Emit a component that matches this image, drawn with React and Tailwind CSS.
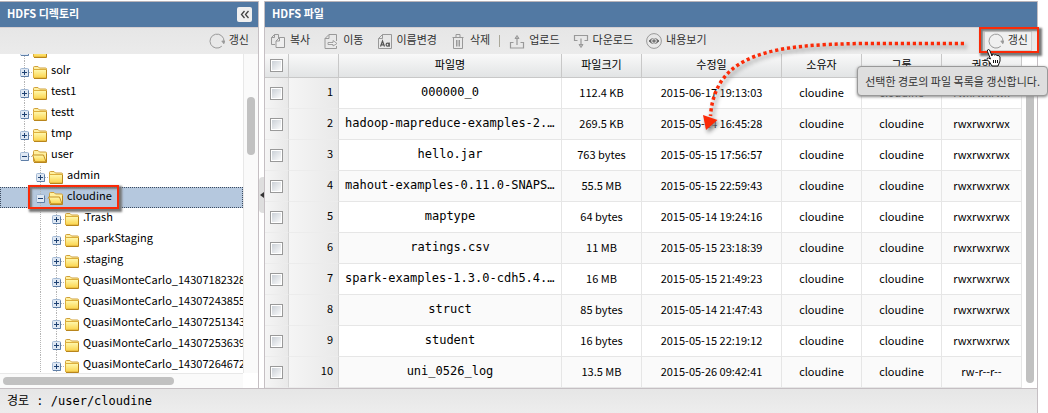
import React from "react";

const files = [
  ["000000_0", "112.4 KB", "2015-06-17 19:13:03", "rwxrwxrwx"],
  ["hadoop-mapreduce-examples-2.2.0.jar", "269.5 KB", "2015-05-14 16:45:28", "rwxrwxrwx"],
  ["hello.jar", "763 bytes", "2015-05-15 17:56:57", "rwxrwxrwx"],
  ["mahout-examples-0.11.0-SNAPSHOT.jar", "55.5 MB", "2015-05-15 22:59:43", "rwxrwxrwx"],
  ["maptype", "64 bytes", "2015-05-14 19:24:16", "rwxrwxrwx"],
  ["ratings.csv", "11 MB", "2015-05-15 23:18:39", "rwxrwxrwx"],
  ["spark-examples-1.3.0-cdh5.4.0.jar", "16 MB", "2015-05-15 21:49:23", "rwxrwxrwx"],
  ["struct", "85 bytes", "2015-05-14 21:47:43", "rwxrwxrwx"],
  ["student", "16 bytes", "2015-05-15 22:19:12", "rwxrwxrwx"],
  ["uni_0526_log", "13.5 MB", "2015-05-26 09:42:41", "rw-r--r--"],
];

const tree = [
  { name: "", level: 0 },
  { name: "solr", level: 0 },
  { name: "test1", level: 0 },
  { name: "testt", level: 0 },
  { name: "tmp", level: 0 },
  { name: "user", level: 0, open: true, last: true },
  { name: "admin", level: 1 },
  { name: "cloudine", level: 1, open: true, selected: true },
  { name: ".Trash", level: 2 },
  { name: ".sparkStaging", level: 2 },
  { name: ".staging", level: 2 },
  { name: "QuasiMonteCarlo_143071823280", level: 2 },
  { name: "QuasiMonteCarlo_14307243855", level: 2 },
  { name: "QuasiMonteCarlo_143072513433", level: 2 },
  { name: "QuasiMonteCarlo_14307253639", level: 2 },
  { name: "QuasiMonteCarlo_14307264672", level: 2 },
];

function Guide({ end = 21 }) {
  return <path d={`M8.5 0V${end}`} stroke="#b5b5b5" strokeDasharray="1 1" />;
}

function Cell({ children }) {
  return (
    <svg width="16" height="21" viewBox="0 0 16 21" fill="none" className="shrink-0">
      {children}
    </svg>
  );
}

function Expander({ open, last }) {
  return (
    <Cell>
      <Guide end={last ? 8 : 21} />
      <path d="M13 11.5H16" stroke="#b5b5b5" strokeDasharray="1 1" />
      <rect x="4.5" y="7.5" width="8" height="8" rx="1" fill="#dfe8f3" stroke="#a3b9d4" />
      <path d="M5 15.5H12.5V8.5" stroke="#5f7fa8" />
      <path d={open ? "M6 11.5H11" : "M6 11.5H11M8.5 9V14"} stroke="#1f4273" />
    </Cell>
  );
}

function Folder({ open }) {
  return (
    <svg width="16" height="21" viewBox="0 0 16 21" className="shrink-0">
      <defs>
        <linearGradient id="folder" x1="0" y1="0" x2="0" y2="1">
          <stop offset="0" stopColor="#fff9b0" />
          <stop offset="1" stopColor="#fbd34a" />
        </linearGradient>
      </defs>
      <path
        d="M1.5 16V6.500Q1.500 5.500 2.500 5.500H6L7.500 7H13.500Q14.500 7 14.500 8V16Q14.500 17 13.500 17H2.500Q1.500 17 1.500 16Z"
        fill="#fff0a0"
        stroke="#d0a03a"
      />
      {open ? (
        <path d="M0.6 10H11.5L14 16.8H3Z" fill="url(#folder)" stroke="#c48f22" />
      ) : (
        <path d="M1.5 8.500H14.500V16Q14.500 17 13.500 17H2.500Q1.500 17 1.500 16Z" fill="url(#folder)" stroke="#dcae3c" />
      )}
      <path d="M2 17.500H14.500V9" fill="none" stroke="#b8851c" />
    </svg>
  );
}

function TreeRow({ name, level, open, last, selected }) {
  return (
    <li
      className={
        "flex h-[21px] items-start pl-4 whitespace-nowrap " +
        (selected ? "bg-[#b5c8de] outline-1 -outline-offset-1 outline-dotted outline-[#3c4b60]" : "")
      }
    >
      {level > 0 && <Cell />}
      {level > 1 && (
        <Cell>
          <Guide />
        </Cell>
      )}
      <Expander open={open} last={last} />
      <Folder open={open} />
      <span className="pl-[3px] leading-4">{name}</span>
    </li>
  );
}

function Icon({ children }) {
  return (
    <svg width="16" height="18" viewBox="0 0 16 18" fill="none" stroke="#999" className="shrink-0">
      {children}
    </svg>
  );
}

const icons = {
  copy: (
    <Icon>
      <path d="M8.500 6V2.500H4.500L1.500 5.500V12.500H5M4.500 2.500V5.500H1.500" />
      <path d="M9.500 5.500H14.500V15.500H6V9ZM9.500 5.500V9H6" fill="#efefef" />
    </Icon>
  ),
  move: (
    <Icon>
      <path d="M13.500 9V2.500H6L2 6.500V16.500H13.500V14M6 2.500V6.500H2" />
      <path d="M5 10.500H10V8.500L14 11.500L10 14V12.500H5Z" fill="#efefef" strokeWidth="0.9" />
    </Icon>
  ),
  rename: (
    <Icon>
      <path d="M14.500 16.500H1.500V6.500L5.500 2.500H14.500ZM5.500 2.500V6.500H1.500" />
      <path d="M3.500 14.500L5.500 9L7.500 14.500M4.200 12.800H7" stroke="#555" strokeWidth="1.2" />
      <path d="M12.200 10.500V14.700" stroke="#555" strokeWidth="1.2" />
      <circle cx="10.600" cy="12.700" r="1.500" stroke="#555" strokeWidth="1.2" />
    </Icon>
  ),
  remove: (
    <Icon>
      <path d="M2.500 5.500H13.500M6 5V2.500H10V5M3.500 6V16.500H12.500V6M6.500 8V14.500M8 8V14.500M9.500 8V14.500" />
    </Icon>
  ),
  upload: (
    <Icon>
      <path d="M4.500 10.500H1.500V16H14.500V10.500H11.500M8 13V6.500" strokeWidth="1.200" />
      <path d="M8 3.500L10 6.500H6Z" fill="#bbb" />
    </Icon>
  ),
  download: (
    <Icon>
      <path d="M4.500 8.500H1.500V3.500H14.500V8.500H11.500M8 6.500V13" strokeWidth="1.200" />
      <path d="M8 15.500L10 12.500H6Z" fill="#bbb" />
    </Icon>
  ),
  view: (
    <Icon>
      <circle cx="8" cy="9" r="7.400" />
      <path d="M3 9Q8 3.800 13 9Q8 14.200 3 9Z" fill="#666" stroke="#666" />
      <circle cx="8" cy="9" r="2.300" fill="#777" stroke="#fff" strokeWidth="0.9" />
    </Icon>
  ),
  refresh: (
    <Icon>
      <path d="M12.800 14.200A7 7 0 1 1 15 9.500" />
      <path d="M12.800 9L14.800 11.800L16 9Z" fill="#999" strokeWidth="0.8" />
    </Icon>
  ),
};

function Tool({ icon, label, className = "" }) {
  return (
    <button type="button" className={"flex items-center gap-1 whitespace-nowrap text-[#333] " + className}>
      {icons[icon]}
      <span className="pb-1">{label}</span>
    </button>
  );
}

function Title({ children }) {
  return (
    <header className="flex h-[26px] items-center justify-between border-t border-[#b9b4b9] bg-[#5279a3] pr-[6px] pl-[7px] text-white">
      {children}
    </header>
  );
}

function Check({ label }) {
  return (
    <input
      type="checkbox"
      aria-label={label}
      className="mx-auto block size-[13px] appearance-none border border-[#999] bg-linear-to-br from-[#c6ccd3] to-white shadow-[inset_0_0_0_1px_#fff]"
    />
  );
}

const headBase =
  "h-6 border-r border-b border-[#c8c8c8] bg-linear-to-b from-[#f9f9f9] to-[#e2e4e5] p-0 font-normal";
const headCell = headBase + " pb-1";
const bodyCell = "h-[31px] border-r border-b border-[#e6e6e6] p-0 pb-[2px]";
const grayCell =
  "h-[31px] border-r border-b border-r-[#d6d6d6] border-b-[#ececec] bg-linear-to-r from-[#f5f5f5] to-[#e9e9e9] p-0";

export default function App() {
  return (
    <div className="relative overflow-hidden bg-white pt-px font-['Noto_Sans_CJK_KR',sans-serif] text-[11px] leading-4 text-black">
      <div className="mr-[10px] flex items-stretch border-r border-[#c5bfc3]">
        <section className="flex w-[259px] shrink-0 flex-col border-r border-[#c5bfc3]">
          <Title>
            <h2 className="pb-1 font-bold">HDFS 디렉토리</h2>
            <button
              type="button"
              aria-label="접기"
              className="flex size-[15px] items-center justify-center rounded-xs bg-[#f0f0f0]"
            >
              <svg width="10" height="9" viewBox="0 0 10 9" fill="none" stroke="#444" strokeWidth="1.3">
                <path d="M4.5 1L1.5 4.5L4.5 8M8.5 1L5.5 4.5L8.5 8" />
              </svg>
            </button>
          </Title>
          <div className="flex h-[27px] items-center justify-end border-t border-[#d5cfd2] bg-linear-to-b from-[#e6e6e6] to-[#ebebeb] pr-[9px]">
            <Tool icon="refresh" label="갱신" />
          </div>
          <div className="flex min-h-0 flex-1 basis-0">
            <div className="flex min-w-0 flex-1 flex-col">
              <div className="min-h-0 flex-1 basis-0 overflow-hidden">
                <ul className="-mt-[14px]">
                  {tree.map((node, i) => (
                    <TreeRow key={i} {...node} />
                  ))}
                </ul>
              </div>
              <div className="flex h-[15px] shrink-0 items-center border-t border-[#e8e8e8] bg-[#fafafa] px-[3px]">
                <div className="h-2 w-[171px] rounded-full bg-[#c1c1c1]" />
              </div>
            </div>
            <div className="mb-[15px] w-[15px] shrink-0 border-l border-[#e8e8e8] bg-[#fafafa] pt-[43px]">
              <div className="mx-auto h-[58px] w-2 rounded-full bg-[#c1c1c1]" />
            </div>
          </div>
        </section>

        <div className="flex w-[5px] shrink-0 items-center">
          <button
            type="button"
            aria-label="패널 접기"
            className="flex h-9 w-[5px] items-center justify-center rounded-l-sm bg-[#dedede]"
          >
            <svg width="4" height="6" viewBox="0 0 4 6">
              <path d="M4 0V6L0 3Z" fill="#333" />
            </svg>
          </button>
        </div>

        <section className="min-w-0 flex-1 border-l border-[#c5bfc3]">
          <Title>
            <h2 className="pb-1 font-bold">HDFS 파일</h2>
          </Title>
          <div className="flex h-[27px] items-center gap-[13px] border-t border-[#d5cfd2] bg-linear-to-b from-[#e6e6e6] to-[#ebebeb] pl-[5px]">
            <Tool icon="copy" label="복사" />
            <Tool icon="move" label="이동" />
            <Tool icon="rename" label="이름변경" />
            <Tool icon="remove" label="삭제" />
            <div className="-mx-1 h-3 w-px bg-[#aaa89a]" />
            <Tool icon="upload" label="업로드" />
            <Tool icon="download" label="다운로드" />
            <Tool icon="view" label="내용보기" />
            <Tool icon="refresh" label="갱신" className="mr-[5px] ml-auto h-5 border border-[#d0d0d0] bg-[#f0f0f0] px-[3px]" />
          </div>
          <div className="flex">
            <div className="min-w-0 flex-1">
              <table className="w-full table-fixed border-separate border-spacing-0 text-center">
                <colgroup>
                  <col className="w-6" />
                  <col className="w-[50px]" />
                  <col />
                  <col className="w-20" />
                  <col className="w-[140px]" />
                  <col className="w-20" />
                  <col className="w-20" />
                  <col className="w-20" />
                </colgroup>
                <thead>
                  <tr>
                    <th className={headBase}>
                      <Check label="전체 선택" />
                    </th>
                    <th className={headCell} />
                    <th className={headCell}>파일명</th>
                    <th className={headCell}>파일크기</th>
                    <th className={headCell}>수정일</th>
                    <th className={headCell}>소유자</th>
                    <th className={headCell}>그룹</th>
                    <th className={headCell}>권한</th>
                  </tr>
                </thead>
                <tbody>
                  {files.map(([name, size, date, mode], i) => (
                    <tr key={name} className="even:bg-[#fafafa]">
                      <td className={grayCell}>
                        <Check label={name} />
                      </td>
                      <td className={grayCell + " pr-[5px] pb-1 text-right"}>{i + 1}</td>
                      <td className={bodyCell}>
                        <div className="truncate px-[6px] font-['DejaVu_Sans_Mono',monospace] text-[12px]">{name}</div>
                      </td>
                      <td className={bodyCell}>{size}</td>
                      <td className={bodyCell}>{date}</td>
                      <td className={bodyCell}>cloudine</td>
                      <td className={bodyCell}>cloudine</td>
                      <td className={bodyCell}>{mode}</td>
                    </tr>
                  ))}
                </tbody>
              </table>
            </div>
            <div className="flex w-[15px] shrink-0 justify-center pt-6 pb-[5px]">
              <div className="w-2 rounded-full bg-[#c1c1c1]" />
            </div>
          </div>
        </section>
      </div>

      <footer className="mr-[10px] flex h-[26px] items-center border-y border-r border-[#c5bfc3] bg-linear-to-b from-[#e6e6e6] to-[#ededed] pl-[7px] font-['DejaVu_Sans_Mono','Noto_Sans_CJK_KR',monospace] text-[12px]">
        경로 : /user/cloudine
      </footer>

      <div className="pointer-events-none absolute top-[185px] left-7 h-6 w-[91px] border-2 border-[#fb2a07] shadow-[2px_2px_2px_1px_#777,inset_2px_2px_2px_#777]" />
      <div className="pointer-events-none absolute top-[27px] right-[9px] h-[26px] w-[60px] border-2 border-[#fb2a07] shadow-[2px_2px_2px_1px_#777,inset_2px_2px_2px_#777]" />
      <div
        role="tooltip"
        className="absolute top-[66px] right-0 rounded-sm border border-[#999] bg-[#dedede] px-[7px] py-[6px] whitespace-nowrap text-[#333] shadow-[0_1px_3px_#888]"
      >
        선택한 경로의 파일 목록을 갱신합니다.
      </div>
      <svg
        width="280"
        height="110"
        viewBox="695 30 280 110"
        fill="none"
        className="pointer-events-none absolute top-[30px] right-[73px] drop-shadow-[2px_3px_2px_#888]"
      >
        <path d="M964 43.5L860 43.5C775 45 715 52 710.5 116" stroke="#fb2a07" strokeWidth="3.5" strokeDasharray="3.2 2.8" />
        <path d="M703 115L717.5 120L706 130Z" fill="#fb2a07" />
      </svg>
      <svg
        width="16"
        height="20"
        viewBox="0 0 16 20"
        className="pointer-events-none absolute top-12 right-[46px]"
      >
        <path
          d="M1.5 3.5Q1 1.500 2.500 1.500Q3.500 1.500 4 3L6 8V6.500Q7.500 5.500 8.500 7Q10 6 11 7.500Q13.500 7 14 9V13L12 18H6L3.500 14L1 11.500Q1 9.500 2.500 10L4.500 11Z"
          fill="#fff"
          stroke="#111"
        />
        <path d="M7.500 12V15M9.500 12V15M11.500 12V15" stroke="#111" />
      </svg>
    </div>
  );
}
